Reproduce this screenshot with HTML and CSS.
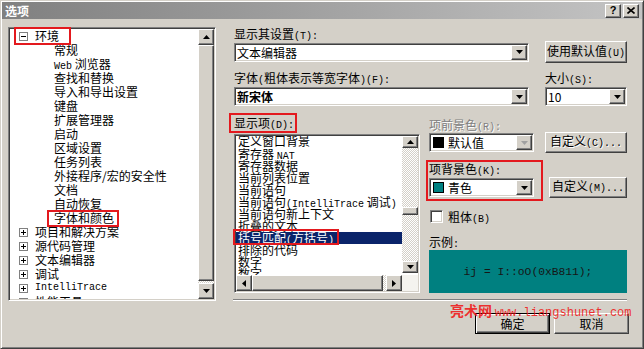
FILE: index.html
```html
<!DOCTYPE html>
<html lang="zh-CN">
<head>
    <meta charset="UTF-8">
    <title>选项</title>
    <link rel="stylesheet" href="styles.css">
</head>
<body>
<div class="window">
    <div class="titlebar">
        <span class="title">选项</span>
        <div class="tb-btns">
            <span class="tb-btn raised">?</span>
            <span class="tb-btn raised">
                <svg width="8" height="7" viewBox="0 0 8 7"><path d="M0.5 0.5L7.5 6.5M7.5 0.5L0.5 6.5" stroke="#000" stroke-width="1.6"/></svg>
            </span>
        </div>
    </div>

    <div class="content">
        <!-- дерево разделов -->
        <div class="tree sunken">
            <ul class="tree-list">
                <li class="node"><span class="pm"></span>环境</li>
                <li class="leaf">常规</li>
                <li class="leaf"><span class="en">Web</span> 浏览器</li>
                <li class="leaf">查找和替换</li>
                <li class="leaf">导入和导出设置</li>
                <li class="leaf">键盘</li>
                <li class="leaf">扩展管理器</li>
                <li class="leaf">启动</li>
                <li class="leaf">区域设置</li>
                <li class="leaf">任务列表</li>
                <li class="leaf">外接程序/宏的安全性</li>
                <li class="leaf">文档</li>
                <li class="leaf">自动恢复</li>
                <li class="leaf">字体和颜色</li>
                <li class="node"><span class="pm plus"></span>项目和解决方案</li>
                <li class="node"><span class="pm plus"></span>源代码管理</li>
                <li class="node"><span class="pm plus"></span>文本编辑器</li>
                <li class="node"><span class="pm plus"></span>调试</li>
                <li class="node"><span class="pm plus"></span><span class="en">IntelliTrace</span></li>
                <li class="node"><span class="pm plus"></span>性能工具</li>
            </ul>
            <div class="vscroll">
                <span class="arrow raised"><svg width="7" height="4"><path d="M3.5 0L7 4H0z"/></svg></span>
                <div class="track"><div class="thumb raised"></div></div>
                <span class="arrow raised"><svg width="7" height="4"><path d="M0 0h7L3.5 4z"/></svg></span>
            </div>
        </div>

        <div class="settings">
            <div class="top-grid">
                <label class="lbl">显示其设置<span class="en">(T):</span></label>
                <span></span>
                <div class="combo sunken">
                    <span class="combo-text">文本编辑器</span>
                    <span class="drop raised"><svg width="7" height="4"><path d="M0 0h7L3.5 4z"/></svg></span>
                </div>
                <button class="btn raised btn-default-val">使用默认值<span class="en">(U)</span></button>
                <label class="lbl lbl-row3">字体<span class="en">(</span>粗体表示等宽字体<span class="en">)(F):</span></label>
                <label class="lbl lbl-row3">大小<span class="en">(S):</span></label>
                <div class="combo sunken">
                    <span class="combo-text bold">新宋体</span>
                    <span class="drop raised"><svg width="7" height="4"><path d="M0 0h7L3.5 4z"/></svg></span>
                </div>
                <div class="combo sunken">
                    <span class="combo-text">10</span>
                    <span class="drop raised"><svg width="7" height="4"><path d="M0 0h7L3.5 4z"/></svg></span>
                </div>
            </div>

            <div class="lower">
                <div class="items-col">
                    <label class="lbl">显示项<span class="en">(D):</span></label>
                    <div class="listbox sunken">
                        <ul class="items">
                            <li>定义窗口背景</li>
                            <li>寄存器 <span class="en">NAT</span></li>
                            <li>寄存器数据</li>
                            <li>当前列表位置</li>
                            <li>当前语句</li>
                            <li>当前语句<span class="en">(IntelliTrace</span> 调试<span class="en">)</span></li>
                            <li>当前语句新上下文</li>
                            <li>折叠的文本</li>
                            <li class="sel">括号匹配<span class="en">(</span>方括号<span class="en">)</span></li>
                            <li>排除的代码</li>
                            <li>数字</li>
                            <li>数字</li>
                        </ul>
                        <div class="lb-vscroll">
                            <span class="arrow short raised"><svg width="7" height="4"><path d="M3.5 0L7 4H0z"/></svg></span>
                            <div class="track"><div class="lb-thumb raised"></div></div>
                            <span class="arrow short raised"><svg width="7" height="4"><path d="M0 0h7L3.5 4z"/></svg></span>
                        </div>
                        <div class="lb-hscroll">
                            <span class="arrow raised"><svg width="4" height="7"><path d="M0 3.5L4 0V7z"/></svg></span>
                            <div class="htrack"><div class="hthumb raised"></div></div>
                            <span class="arrow raised"><svg width="4" height="7"><path d="M0 0L4 3.5L0 7z"/></svg></span>
                        </div>
                        <div class="corner"></div>
                    </div>
                </div>

                <div class="props-col">
                    <label class="lbl disabled">项前景色<span class="en">(R):</span></label>
                    <div class="prop-row">
                        <div class="combo sunken color-combo">
                            <span class="combo-text"><span class="swatch black"></span>默认值</span>
                            <span class="drop raised off"><svg width="7" height="4"><path d="M0 0h7L3.5 4z"/></svg></span>
                        </div>
                        <button class="btn raised btn-custom disabled">自定义<span class="en">(C)...</span></button>
                    </div>
                    <label class="lbl lbl-back">项背景色<span class="en">(K):</span></label>
                    <div class="prop-row row-back">
                        <div class="combo sunken color-combo">
                            <span class="combo-text"><span class="swatch teal"></span>青色</span>
                            <span class="drop raised"><svg width="7" height="4"><path d="M0 0h7L3.5 4z"/></svg></span>
                        </div>
                        <button class="btn raised btn-custom2">自定义<span class="en">(M)...</span></button>
                    </div>
                    <div class="check-row">
                        <span class="checkbox sunken"></span>
                        <span>粗体<span class="en">(B)</span></span>
                    </div>
                    <label class="lbl lbl-sample">示例<span class="en">:</span></label>
                    <div class="sample">ij = I::oO(0xB811);</div>
                </div>
            </div>

            <div class="separator"></div>

            <div class="actions">
                <button class="btn raised btn-ok">确定</button>
                <button class="btn raised btn-cancel">取消</button>
            </div>
        </div>
    </div>

    <!-- красные рамки-пометки поверх окна -->
    <div class="mark mark-env"></div>
    <div class="mark mark-font"></div>
    <div class="mark mark-items"></div>
    <div class="mark mark-sel"></div>
    <div class="mark mark-back"></div>

    <div class="watermark"><span class="wm-cn">亮术网</span> <span class="wm-en">www.liangshunet.com</span></div>
</div>
</body>
</html>
```

FILE: styles.css
```css
* {
    box-sizing: border-box;
}
body {
    margin: 0;
    background: #d4d0c8;
    font-family: "Noto Sans CJK SC", sans-serif;
    font-size: 12px;
    color: #000;
}
.en {
    font-family: "Liberation Mono", monospace;
    font-size: 10px;
}
.bold {
    font-weight: bold;
}

/* classic 3d borders */
.raised {
    background: #d4d0c8;
    border: 1px solid;
    border-color: #fff #404040 #404040 #fff;
    box-shadow: inset -1px -1px #808080;
}
.sunken {
    border: 1px solid;
    border-color: #808080 #fff #fff #808080;
    box-shadow: inset 1px 1px #404040, inset -1px -1px #d4d0c8;
    padding: 1px;
}

.window {
    position: relative;
    width: 644px;
    height: 349px;
    background: #d4d0c8;
    border: 1px solid;
    border-color: #d4d0c8 #404040 #404040 #d4d0c8;
    box-shadow: inset 1px 1px #fff, inset -1px -1px #808080;
    padding: 1px;
    overflow: hidden;
}
.titlebar {
    height: 17px;
    display: flex;
    align-items: center;
    justify-content: space-between;
    padding: 0 3px 0 3px;
    background: linear-gradient(to right, #808080, #c4c4c4);
}
.title {
    color: #fff;
    font-weight: bold;
    line-height: 14px;
}
.tb-btns {
    display: flex;
    gap: 2px;
}
.tb-btn {
    width: 16px;
    height: 14px;
    display: flex;
    align-items: center;
    justify-content: center;
    font-family: "Liberation Sans", sans-serif;
    font-weight: bold;
    font-size: 11px;
    line-height: 1;
}

.content {
    display: flex;
    padding: 8px 0 0 6px;
}

/* tree */
.tree {
    width: 208px;
    height: 274px;
    display: flex;
    background: #fff;
}
.tree-list {
    flex: 1;
    list-style: none;
    margin: 0;
    padding: 0;
    overflow: hidden;
}
.tree-list li {
    height: 14px;
    line-height: 14px;
    white-space: nowrap;
}
.tree-list .leaf {
    padding-left: 44px;
}
.tree-list .node {
    display: flex;
    align-items: center;
    gap: 7px;
    padding-left: 9px;
}
.pm {
    flex: none;
    width: 9px;
    height: 9px;
    border: 1px solid #808080;
    background: linear-gradient(#000, #000) center / 5px 1px no-repeat, #fff;
}
.pm.plus {
    background: linear-gradient(#000, #000) center / 5px 1px no-repeat,
                linear-gradient(#000, #000) center / 1px 5px no-repeat, #fff;
}
.vscroll {
    width: 16px;
    display: flex;
    flex-direction: column;
}
.arrow {
    flex: none;
    width: 16px;
    height: 16px;
    display: flex;
    align-items: center;
    justify-content: center;
}
.arrow.short {
    height: 12px;
}
.arrow svg {
    display: block;
    fill: #000;
}
.track {
    flex: 1;
    background: repeating-conic-gradient(#d4d0c8 0 25%, #fff 0 50%) 0 0 / 2px 2px;
}
.thumb {
    height: 236px;
}

/* right side */
.settings {
    width: 395px;
    margin-left: 18px;
}
.lbl {
    display: block;
    height: 14px;
    line-height: 14px;
    white-space: nowrap;
}
.disabled {
    color: #808080;
    text-shadow: 1px 1px #fff;
}
.top-grid {
    display: grid;
    grid-template-columns: 295px 82px;
    grid-template-rows: 14px 22px 24px 19px;
    column-gap: 16px;
    align-items: center;
}
.top-grid .lbl-row3 {
    align-self: start;
    margin-top: 8px;
}
.combo {
    height: 19px;
    display: flex;
    background: #fff;
}
.combo-text {
    flex: 1;
    display: flex;
    align-items: center;
    gap: 4px;
    padding-left: 1px;
    line-height: 15px;
    white-space: nowrap;
    overflow: hidden;
}
.drop {
    flex: none;
    width: 16px;
    display: flex;
    align-items: center;
    justify-content: center;
}
.drop.off svg {
    fill: #a0a0a0;
}
.btn {
    font-family: "Noto Sans CJK SC", sans-serif;
    font-size: 12px;
    line-height: 14px;
    padding: 0;
    color: #000;
    white-space: nowrap;
}
.btn-default-val {
    height: 22px;
}

.lower {
    display: flex;
    gap: 9px;
    margin-top: 10px;
}
.items-col {
    width: 186px;
}
.listbox {
    margin-top: 4px;
    height: 159px;
    background: #fff;
    display: grid;
    grid-template-columns: 1fr 16px;
    grid-template-rows: 1fr 16px;
}
.items {
    list-style: none;
    margin: 0;
    padding: 0;
    overflow: hidden;
}
.items li {
    height: 12px;
    line-height: 12px;
    padding-left: 2px;
    white-space: nowrap;
}
.items li:first-child {
    margin-top: -1px;
    height: 13px;
}
.items li.sel {
    background: #0a246a;
    color: #fff;
}
.lb-vscroll {
    display: flex;
    flex-direction: column;
    padding-bottom: 2px;
}
.lb-thumb {
    height: 8px;
    margin-top: 59px;
}
.lb-hscroll {
    display: flex;
}
.htrack {
    flex: 1;
    display: flex;
    background: repeating-conic-gradient(#d4d0c8 0 25%, #fff 0 50%) 0 0 / 2px 2px;
}
.hthumb {
    flex: 1;
    margin-right: 3px;
}
.corner {
    background: #f4f3ef;
}

.props-col {
    width: 198px;
    padding-top: 2px;
}
.prop-row {
    height: 21px;
    display: flex;
    align-items: center;
    justify-content: space-between;
}
.color-combo {
    width: 105px;
}
.swatch {
    width: 11px;
    height: 11px;
    border: 1px solid #000;
    margin-left: 1px;
}
.swatch.black {
    background: #000;
}
.swatch.teal {
    background: #008080;
}
.btn-custom {
    width: 82px;
    height: 21px;
}
.btn-custom2 {
    width: 78px;
    height: 21px;
}
.lbl-back {
    margin-top: 9px;
}
.row-back {
    margin-top: 1px;
}
.check-row {
    display: flex;
    align-items: center;
    gap: 5px;
    height: 13px;
    margin-top: 12px;
    padding-left: 1px;
}
.checkbox {
    width: 13px;
    height: 13px;
    background: #fff;
}
.lbl-sample {
    margin-top: 12px;
}
.sample {
    margin-top: 1px;
    height: 43px;
    background: #008080;
    display: flex;
    align-items: center;
    justify-content: center;
    font-family: "Liberation Mono", monospace;
    font-size: 11.3px;
    color: #161616;
}

.separator {
    width: 394px;
    margin: 6px 0 0 -1px;
    border-top: 1px solid #808080;
    border-bottom: 1px solid #fff;
}
.actions {
    display: flex;
    justify-content: flex-end;
    gap: 4px;
    margin-top: 12px;
}
.actions .btn {
    width: 75px;
    height: 21px;
}
.btn-ok {
    border: 1px solid #000;
    box-shadow: inset 1px 1px #fff, inset -1px -1px #404040, inset -2px -2px #808080;
}

/* red annotation frames */
.mark {
    position: absolute;
    border: 2px solid #e3191e;
}
.mark-env {
    left: 13px;
    top: 26px;
    width: 57px;
    height: 18px;
}
.mark-font {
    left: 46px;
    top: 209px;
    width: 72px;
    height: 17px;
}
.mark-items {
    left: 228px;
    top: 112px;
    width: 68px;
    height: 20px;
}
.mark-sel {
    left: 232px;
    top: 228px;
    width: 106px;
    height: 16px;
}
.mark-back {
    left: 425px;
    top: 159px;
    width: 117px;
    height: 41px;
}

.watermark {
    position: absolute;
    left: 449px;
    top: 300px;
    line-height: 18px;
    color: rgba(240, 24, 24, 0.9);
    white-space: nowrap;
}
.wm-cn {
    font-size: 14px;
    font-weight: bold;
}
.wm-en {
    font-family: "Liberation Mono", monospace;
    font-size: 12px;
}
```
